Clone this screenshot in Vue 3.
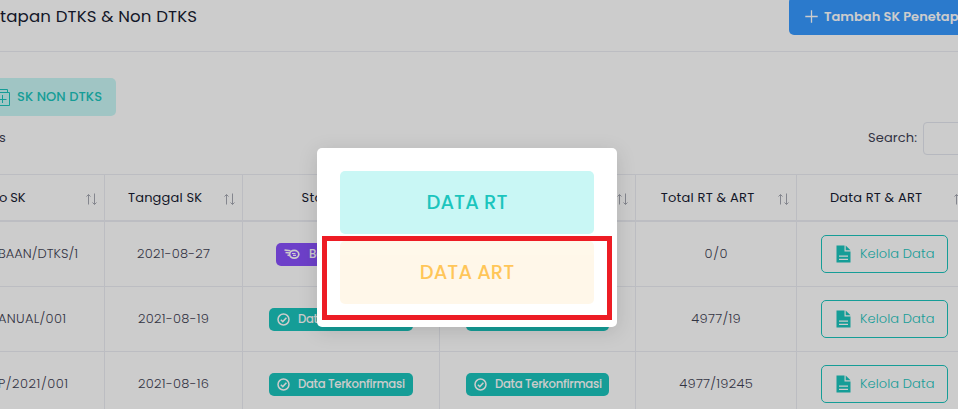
<script setup>
// Tracks a label so that its advance width equals the given number of pixels.
const vFit = {
  mounted(el, { value }) {
    if (!value) return
    const natural = el.getBoundingClientRect().width
    const spacing = (value - natural) / Math.max(1, el.textContent.length - 1)
    el.style.letterSpacing = `${spacing}px`
    el.style.marginRight = `${-spacing}px`
  },
}

const headers = [
  { label: 'o SK', w: 26.5, first: true },
  { label: 'Tanggal SK', w: 74 },
  { label: 'Status RT', w: 62 },
  { label: 'ART', w: 27 },
  { label: 'Total RT & ART', w: 93.5 },
  { label: 'Data RT & ART', w: 92 },
]

const rows = [
  { sk: 'BAAN/DTKS/1', skW: 80, date: '2021-08-27', dateW: 73, pending: true, total: '0/0', totalW: 23 },
  { sk: 'ANUAL/001', skW: 68, date: '2021-08-19', dateW: 71, total: '4977/19', totalW: 49.5 },
  { sk: 'P/2021/001', skW: 70, date: '2021-08-16', dateW: 71, total: '4977/19245', totalW: 73.5 },
]
</script>

<template>
  <div class="page">
    <header class="card-header">
      <h3 class="title"><span v-fit="197">tapan DTKS &amp; Non DTKS</span></h3>
      <button class="btn primary">
        <svg width="13" height="13" viewBox="0 0 13 13"><path d="M6.500 .3v12.400M.3 6.500h12.400" stroke="currentColor" stroke-width="1.300" /></svg>
        <span v-fit="152">Tambah SK Penetapan</span>
      </button>
    </header>

    <div class="toolbar">
      <button class="btn light">
        <svg width="18" height="18" viewBox="0 0 18 18" fill="none" stroke="currentColor" stroke-width="1">
          <path d="M2.500 4.500v-3h13v3M.5 4.500h17v13H.5zM10.500 7v8M6.500 11.500h8" />
        </svg>
        <span v-fit="85">SK NON DTKS</span>
      </button>
    </div>

    <div class="controls">
      <span>s</span>
      <label class="search"><span v-fit="49">Search:</span><input type="text" /></label>
    </div>

    <div class="table">
      <div class="row head">
        <div v-for="h in headers" :key="h.label" class="cell th" :class="{ first: h.first }">
          <span v-fit="h.w">{{ h.label }}</span>
          <svg class="sort" width="13" height="13" viewBox="0 0 13 13" fill="none" stroke="currentColor" stroke-width="1">
            <path d="M3.500 11.500V1.500M1.500 3.500l2-2 2 2M9.500 .5v11M7.500 9.500l2 2 2-2" />
          </svg>
        </div>
      </div>

      <div v-for="r in rows" :key="r.sk" class="row">
        <div class="cell first"><span v-fit="r.skW">{{ r.sk }}</span></div>
        <div class="cell"><span v-fit="r.dateW">{{ r.date }}</span></div>
        <div class="cell">
          <div v-if="r.pending" class="badge purple">
            <svg width="16" height="11" viewBox="0 0 16 11" fill="none" stroke="currentColor">
              <path d="M.5 1l6 .8M1.500 3.500l4.500 .5M3.500 6l2 .5" stroke-width="1.600" />
              <ellipse cx="10.200" cy="5.300" rx="4.600" ry="3.900" stroke-width="1.700" />
              <path d="M8 4.500h3.500M9 6.300h3" stroke-width="1.200" />
            </svg>
            <span>Belum Selesai</span>
          </div>
          <div v-else class="badge">
            <svg width="13" height="13" viewBox="0 0 13 13" fill="none" stroke="currentColor" stroke-width="1.500">
              <circle cx="6.500" cy="6.500" r="5.500" /><path d="M3.800 6.700l2 1.900 3.600-3.900" />
            </svg>
            <span v-fit="107">Data Terkonfirmasi</span>
          </div>
        </div>
        <div class="cell">
          <div v-if="!r.pending" class="badge narrow">
            <svg width="13" height="13" viewBox="0 0 13 13" fill="none" stroke="currentColor" stroke-width="1.500">
              <circle cx="6.500" cy="6.500" r="5.500" /><path d="M3.800 6.700l2 1.900 3.600-3.900" />
            </svg>
            <span v-fit="107">Data Terkonfirmasi</span>
          </div>
        </div>
        <div class="cell"><span v-fit="r.totalW">{{ r.total }}</span></div>
        <div class="cell">
          <button class="btn outline">
            <svg width="15" height="18" viewBox="0 0 15 18">
              <path fill="currentColor" fill-rule="evenodd" d="M.5 .5h8v6h6v11H.5zM3 10.500v1.200h9v-1.200zM3 13.700v1.200h9v-1.200z" />
              <path fill="currentColor" d="M9.700 .5l4.800 4.800H9.700z" />
            </svg>
            <span v-fit="74.500">Kelola Data</span>
          </button>
        </div>
      </div>
    </div>

    <div class="overlay">
      <div class="modal">
        <button class="choice rt"><span v-fit="81">DATA RT</span></button>
        <button class="choice art"><span v-fit="94.500">DATA ART</span></button>
        <div class="marker"></div>
      </div>
    </div>
  </div>
</template>

<style>
body {
  margin: 0;
  overflow: hidden;
}
</style>

<style scoped>
* {
  box-sizing: border-box;
}
.page {
  position: relative;
  width: 958px;
  height: 409px;
  overflow: hidden;
  background: #fff;
  color: #3f4254;
  font: 300 13px/20px Poppins, Inter, sans-serif;
}
span {
  white-space: nowrap;
}
svg {
  flex: none;
}
button {
  font: inherit;
}
.card-header {
  display: flex;
  height: 52px;
  border-bottom: 1px solid #ebedf3;
}
.title {
  flex: none;
  width: 789px;
  margin: 0;
  padding-top: 7px;
  color: #181c32;
  font-size: 16.6px;
  font-weight: 400;
}
.btn {
  display: flex;
  flex: none;
  align-items: center;
  height: 38px;
  border: 0;
  border-radius: 5px;
}
.primary {
  width: 200px;
  margin-top: -3px;
  padding: 1px 0 0 16px;
  gap: 6px;
  background: #3699ff;
  color: #fff;
  font-size: 13px;
  font-weight: 600;
}
.toolbar {
  padding-top: 26px;
}
.light {
  width: 136px;
  margin-left: -20px;
  padding: 0 0 0 12px;
  gap: 7px;
  background: #c9f7f5;
  color: #1bc5bd;
  font-size: 13px;
  font-weight: 500;
}
.controls {
  display: flex;
  justify-content: space-between;
  align-items: center;
  width: 1000px;
  height: 33px;
  margin-top: 6px;
  font-weight: 400;
}
.controls > span {
  margin: -2px 0 0 -1px;
}
.search {
  display: flex;
  align-items: center;
  width: 132px;
}
.search span {
  flex: none;
  margin-top: -2px;
}
.search input {
  width: 120px;
  height: 33px;
  flex: none;
  margin-left: 6px;
  border: 1px solid #e4e6ef;
  border-radius: 4px;
  background: #fff;
}
.table {
  width: 973px;
  margin-top: 19px;
  border-top: 1px solid #ebedf3;
}
.row {
  display: grid;
  grid-template-columns: 105px 138px 197px 196px 161px 176px;
  height: 65px;
}
.head {
  height: 47px;
}
.cell {
  display: flex;
  align-items: center;
  justify-content: center;
  border-right: 1px solid #ebedf3;
  border-bottom: 1px solid #ebedf3;
}
.cell.first {
  justify-content: flex-start;
}
.cell.first span {
  margin-left: -2px;
}
.th {
  position: relative;
  padding-right: 17px;
  color: #181c32;
  font-weight: 400;
  border-bottom-width: 2px;
}
.th.first span {
  margin-left: -1px;
}
.sort {
  position: absolute;
  right: 6px;
  top: 18px;
  color: #a6a8b2;
}
.badge {
  display: flex;
  align-items: center;
  width: 144px;
  height: 23px;
  padding-left: 8px;
  gap: 8px;
  border-radius: 5px;
  background: #1bc5bd;
  color: #fff;
  font-size: 11.7px;
  font-weight: 500;
}
.badge.narrow {
  width: 143px;
}
.badge.purple {
  width: 130px;
  gap: 9px;
  background: #8950fc;
}
.outline {
  width: 127px;
  padding: 0 0 0 14px;
  gap: 9px;
  border: 1px solid #1bc5bd;
  background: transparent;
  color: #1bc5bd;
}
.overlay {
  position: absolute;
  inset: 0;
  background: rgba(0, 0, 0, 0.2);
}
.modal {
  position: absolute;
  left: 317px;
  top: 148px;
  display: flex;
  flex-direction: column;
  gap: 7px;
  width: 300px;
  height: 179px;
  padding: 23px;
  border-radius: 5px;
  background: #fff;
  box-shadow: 0 4px 20px rgba(0, 0, 0, 0.13);
}
.choice {
  display: flex;
  align-items: center;
  justify-content: center;
  width: 254px;
  height: 63px;
  flex: none;
  padding: 0;
  border: 0;
  border-radius: 5px;
  font-size: 19.5px;
  font-weight: 500;
}
.rt {
  background: #c9f7f5;
  color: #1bc5bd;
}
.art {
  background: #fff4de;
  color: #ffa800;
  opacity: 0.65;
}
.marker {
  position: absolute;
  left: 5px;
  top: 88px;
  width: 290px;
  height: 84px;
  border: 5px solid #ed1c24;
}
</style>
